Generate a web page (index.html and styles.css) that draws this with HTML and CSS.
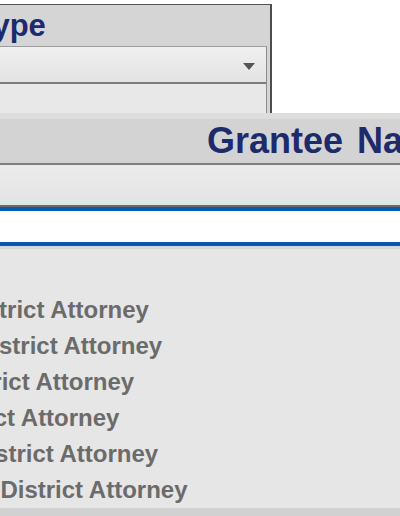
FILE: index.html
```html
<!DOCTYPE html>
<html lang="en">
<head>
<meta charset="utf-8">
<title>Grantees</title>
<link rel="stylesheet" href="styles.css">
</head>
<body>
<div class="page">
  <section class="filter">
    <h2 class="filter-title">Grantee Type</h2>
    <div class="filter-inner">
      <div class="select">
        <span class="select-value"></span>
        <svg class="caret" width="12" height="7" viewBox="0 0 12 7" aria-hidden="true"><polygon points="0,0 12,0 6,7"/></svg>
      </div>
      <div class="filter-body"></div>
    </div>
  </section>
  <section class="grid">
    <div class="grid-head"><span class="grid-th">Grantee Name</span></div>
    <div class="grid-toolbar"></div>
    <div class="grid-search"><input class="search-input" type="text" aria-label="Filter grantee name"></div>
    <ul class="grid-rows">
      <li>Siskiyou County District Attorney</li>
      <li>Humboldt County District Attorney</li>
      <li>Merced County District Attorney</li>
      <li>Sutter County District Attorney</li>
      <li>Riverside County District Attorney</li>
      <li>Sacramento County District Attorney</li>
    </ul>
    <div class="grid-foot"></div>
  </section>
</div>
</body>
</html>
```

FILE: styles.css
```css
html, body {
  margin: 0;
  padding: 0;
  overflow: hidden;
  background: #ffffff;
}
body {
  width: 400px;
  height: 516px;
}
.page {
  margin-left: -233px;
  width: 760px;
  padding-top: 4px;
}

/* filter panel */
.filter {
  width: 505px;
  box-sizing: border-box;
  border-top: 1px solid #555555;
  border-right: 2px solid #4d4d4d;
  background: #d5d5d5;
}
.filter-title {
  margin: 0;
  height: 41px;
  box-sizing: border-box;
  padding: 3px 0 0 83px;
  font: bold 31px/36px "Liberation Sans", Arial, sans-serif;
  color: #1c2b6b;
  white-space: nowrap;
}
.filter-inner {
  padding-right: 3px;
}
.select {
  height: 38px;
  box-sizing: border-box;
  border-top: 1px solid #9c9c9c;
  border-bottom: 2px solid #7d7d7d;
  border-right: 1px solid #8c8c8c;
  background: linear-gradient(#f0f0f0, #e3e3e3);
  display: flex;
  align-items: center;
  justify-content: space-between;
  padding-right: 11px;
}
.caret {
  fill: #555555;
  margin-top: 3px;
}
.filter-body {
  height: 29px;
  background: #e8e8e8;
  border-right: 1px solid #8c8c8c;
}

/* grid */
.grid {
  background: #e6e6e6;
}
.grid-head {
  height: 41px;
  padding: 9px 0 0 440px;
  background: linear-gradient(#dddddd 0, #dddddd 6px, #d3d3d3 6px);
  border-bottom: 2px solid #7f7f7f;
  white-space: nowrap;
}
.grid-th {
  font: bold 36px/38px "Liberation Sans", Arial, sans-serif;
  word-spacing: 4px;
  color: #1c2b6b;
}
.grid-toolbar {
  height: 40px;
  background: linear-gradient(#ececec, #e3e3e3);
  border-bottom: 2px solid #6a6a6a;
}
.grid-search {
  border-top: 4px solid #0b57b0;
  border-bottom: 4px solid #0b57b0;
  background: #ffffff;
  height: 31px;
}
.search-input {
  display: block;
  width: 100%;
  height: 31px;
  border: 0;
  padding: 0;
  background: transparent;
  outline: none;
}
.grid-rows {
  list-style: none;
  margin: 0;
  padding: 43px 0 0 0;
  border-top: 3px solid #d6d6d6;
  font: bold 24px/36px "Liberation Sans", Arial, sans-serif;
  color: #6b6b6b;
  white-space: nowrap;
}
.grid-foot {
  height: 12px;
  background: #d1d1d1;
}
```
